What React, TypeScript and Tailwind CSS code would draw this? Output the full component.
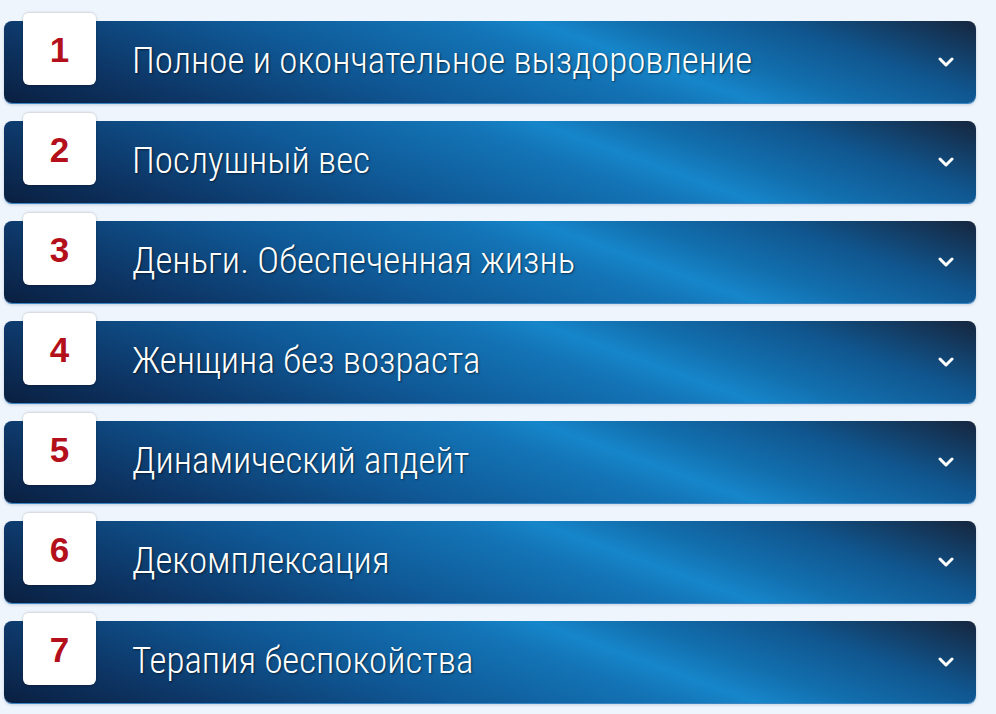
const items = [
  'Полное и окончательное выздоровление',
  'Послушный вес',
  'Деньги. Обеспеченная жизнь',
  'Женщина без возраста',
  'Динамический апдейт',
  'Декомплексация',
  'Терапия беспокойства',
];

function Chevron() {
  return (
    <svg width="16" height="10" viewBox="0 0 16 10" fill="none">
      <path d="M2 2l6 6 6-6" stroke="white" strokeWidth="3" strokeLinecap="round" strokeLinejoin="round" />
    </svg>
  );
}

function AccordionItem({ num, title }: { num: number; title: string }) {
  return (
    <div className="relative">
      <button
        type="button"
        className="flex h-[82px] w-full items-center rounded-lg pl-[128px] pr-[22px] text-left shadow-[0_1px_0_#3a86c4,0_2px_3px_rgba(0,40,90,0.18)] bg-[linear-gradient(20deg,#0a1f40_0%,#0d3666_16%,#0f5794_36%,#1374b6_56%,#1686ca_63%,#126fae_71%,#10568f_83%,#16263e_100%)]"
      >
        <span className="flex-1 pb-[3px] font-['Roboto_Condensed','Liberation_Sans',sans-serif] text-[37px] font-light leading-none text-white [text-shadow:1px_1px_2px_rgba(0,0,0,0.55)]">
          {title}
        </span>
        <Chevron />
      </button>
      {/* number badge sticks out above the bar */}
      <div className="absolute left-[19px] top-[-9px] flex h-[73px] w-[73px] items-center justify-center rounded-md border-t border-[#d9dde2] bg-white shadow-[0_1px_3px_rgba(0,0,0,0.25)]">
        <span className="font-['Liberation_Sans',Arial,sans-serif] text-[35px] font-bold leading-none text-[#b3101b]">
          {num}
        </span>
      </div>
    </div>
  );
}

export default function App() {
  return (
    <div className="min-h-[714px] bg-[#eef5fc] pl-[4px] pr-[20px] pt-[21px]">
      <div className="flex flex-col gap-[18px]">
        {items.map((t, i) => (
          <AccordionItem key={t} num={i + 1} title={t} />
        ))}
      </div>
    </div>
  );
}
